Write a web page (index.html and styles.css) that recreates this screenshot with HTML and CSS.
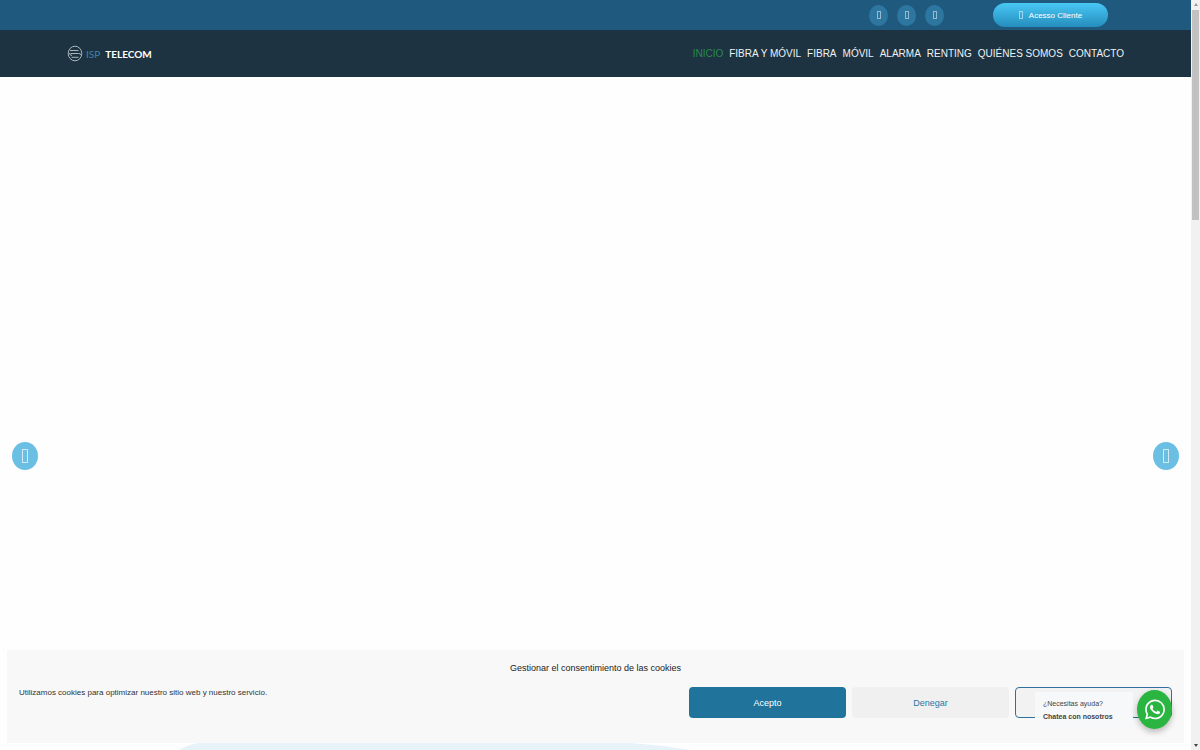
FILE: index.html
```
<!DOCTYPE html>
<html lang="es">
<head>
<meta charset="utf-8">
<meta name="viewport" content="width=device-width, initial-scale=1">
<title>ISP Telecom</title>
<link rel="stylesheet" href="styles.css">
</head>
<body>
<div class="page">
  <header>
    <div class="topbar">
      <nav class="social" aria-label="Redes sociales">
        <a href="#" aria-label="Facebook"><i class="box"></i></a>
        <a href="#" aria-label="Twitter"><i class="box"></i></a>
        <a href="#" aria-label="Instagram"><i class="box"></i></a>
      </nav>
      <a class="access" href="#"><i class="box"></i>Acesso Cliente</a>
    </div>
    <div class="mainbar">
      <a class="logo" href="#">
        <svg class="logo-mark" viewBox="0 0 16 17" aria-hidden="true"><ellipse cx="8" cy="8.500" rx="6.800" ry="7.300"/><path d="M3 5.500H11.500M3.500 8.500h8q2.500 0 2.500 1.500M2 8q.5 2 3 2.500M4.500 12.300h7"/></svg>
        <span class="logo-isp">ISP</span><span class="logo-name">TELECOM</span>
      </a>
      <nav class="menu" aria-label="Principal">
        <a class="active" href="#">INICIO</a>
        <a href="#">FIBRA Y MÓVIL</a>
        <a href="#">FIBRA</a>
        <a href="#">MÓVIL</a>
        <a href="#">ALARMA</a>
        <a href="#">RENTING</a>
        <a href="#">QUIÉNES SOMOS</a>
        <a href="#">CONTACTO</a>
      </nav>
    </div>
  </header>
  <main class="slider">
    <button class="arrow" aria-label="Anterior"><i class="box"></i></button>
    <button class="arrow" aria-label="Siguiente"><i class="box"></i></button>
  </main>
  <svg class="wave" viewBox="0 0 510 7" preserveAspectRatio="none" aria-hidden="true"><path d="M0 7Q8 2 19 0H448Q480 2 510 7Z"/></svg>
  <section class="cookies" aria-labelledby="cookie-title">
    <h2 id="cookie-title">Gestionar el consentimiento de las cookies</h2>
    <div class="cookie-row">
      <p>Utilizamos cookies para optimizar nuestro sitio web y nuestro servicio.</p>
      <div class="choices">
        <button class="choice accept">Acepto</button>
        <button class="choice deny">Denegar</button>
        <button class="choice prefs" aria-label="Preferencias"></button>
      </div>
    </div>
  </section>
  <aside class="chat">
    <p class="chat-text">¿Necesitas ayuda?<br><strong>Chatea con nosotros</strong></p>
    <a class="whatsapp" href="#" aria-label="WhatsApp">
      <svg viewBox="0 0 24 24" aria-hidden="true"><path d="M17.472 14.382c-.297-.149-1.758-.867-2.030-.967-.273-.099-.471-.148-.67.150-.197.297-.767.966-.940 1.164-.173.199-.347.223-.644.075-.297-.150-1.255-.463-2.390-1.475-.883-.788-1.480-1.761-1.653-2.059-.173-.297-.018-.458.130-.606.134-.133.298-.347.446-.520.149-.174.198-.298.298-.497.099-.198.050-.371-.025-.520-.075-.149-.669-1.612-.916-2.207-.242-.579-.487-.500-.669-.510-.173-.008-.371-.010-.570-.010-.198 0-.520.074-.792.372-.272.297-1.040 1.016-1.040 2.479 0 1.462 1.065 2.875 1.213 3.074.149.198 2.096 3.200 5.077 4.487.709.306 1.262.489 1.694.625.712.227 1.360.195 1.871.118.571-.085 1.758-.719 2.006-1.413.248-.694.248-1.289.173-1.413-.074-.124-.272-.198-.570-.347m-5.421 7.403h-.004a9.870 9.870 0 01-5.031-1.378l-.361-.214-3.741.982.998-3.648-.235-.374a9.860 9.860 0 01-1.510-5.260c.001-5.450 4.436-9.884 9.888-9.884 2.640 0 5.122 1.030 6.988 2.898a9.825 9.825 0 012.893 6.994c-.003 5.450-4.437 9.884-9.885 9.884m8.413-18.297A11.815 11.815 0 0012.050 0C5.495 0 .160 5.335.157 11.892c0 2.096.547 4.142 1.588 5.945L.057 24l6.305-1.654a11.882 11.882 0 005.683 1.448h.005c6.554 0 11.890-5.335 11.893-11.893a11.821 11.821 0 00-3.480-8.413z"/></svg>
    </a>
  </aside>
</div>
<div class="scrollbar" aria-hidden="true"><i class="up"></i><div class="thumb"></div><i class="down"></i></div>
</body>
</html>
```
FILE: styles.css
```
* { box-sizing: border-box; }
body {
  margin: 0;
  height: 100vh;
  display: flex;
  overflow: hidden;
  background: #fefefe;
  font-family: "Liberation Sans", Arial, sans-serif;
  font-size: 9px;
  color: #333;
}
a { color: inherit; text-decoration: none; }
button { font: inherit; padding: 0; border: 0; cursor: pointer; }
p, h2 { margin: 0; }
.page { position: relative; flex: 1; min-width: 0; display: flex; flex-direction: column; }

.box { display: block; width: 4px; height: 8px; border: 1px solid #ffffff80; }
.topbar {
  height: 30px;
  padding-right: 83px;
  display: flex;
  justify-content: flex-end;
  align-items: center;
  gap: 49px;
  background: #20597e;
}
.social { display: flex; gap: 9px; }
.social a {
  width: 19px;
  height: 21px;
  border-radius: 50%;
  display: grid;
  place-items: center;
  background: #2d76a0;
}
.access {
  width: 115px;
  height: 24px;
  border-radius: 12px;
  display: flex;
  justify-content: center;
  align-items: center;
  gap: 6px;
  color: #fff;
  font-size: 8px;
  background: linear-gradient(#48c8f5, #258dbd);
}
.mainbar {
  height: 47px;
  padding: 0 67px;
  display: flex;
  justify-content: space-between;
  align-items: center;
  background: #1d3341;
}
.logo { display: flex; align-items: center; color: #fff; font-family: Lato, sans-serif; font-size: 10px; }
.logo-mark { width: 16px; height: 17px; margin-right: 3px; fill: none; stroke: #a9b6bd; stroke-width: 1; }
.logo-isp { color: #3c83ad; margin-right: 5px; }
.logo-name { font-weight: 700; }
.menu { display: flex; gap: 6px; color: #eef2f4; font-size: 10px; }
.menu .active { color: #288a4b; }

.slider { flex: 1; padding: 91px 12px 0; display: flex; justify-content: space-between; align-items: center; }
.arrow { width: 26px; height: 28px; border-radius: 50%; display: grid; place-items: center; background: #6bbfe3; }
.arrow .box { width: 6px; height: 14px; border-color: #ffffffb0; }
.wave { width: 43%; height: 7px; margin-left: 15%; fill: #e7f2f9; }

.cookies {
  position: absolute;
  left: 7px;
  right: 7px;
  bottom: 7px;
  padding: 12px 12px 25px;
  background: #f8f8f8;
}
.cookies h2 { font-size: 9px; line-height: 12px; font-weight: 400; text-align: center; color: #222; }
.cookie-row { display: flex; justify-content: space-between; padding-top: 13px; }
.cookie-row p { font-size: 8px; line-height: 12px; }
.choices { display: flex; gap: 6px; }
.choice { width: 157px; height: 31px; border-radius: 4px; }
.accept { background: #20739a; color: #fff; }
.deny { background: #f0f0f0; color: #2878a5; }
.prefs { background: #f2f2f2; border: 1px solid #2e719d; }

.chat { position: absolute; right: 19px; bottom: 21px; display: flex; align-items: center; gap: 4px; }
.chat-text {
  width: 98px;
  padding: 5px 8px;
  background: #f6f8fa;
  color: #444;
  font-size: 7px;
  line-height: 13px;
}
.whatsapp {
  width: 35px;
  height: 39px;
  border-radius: 50%;
  display: grid;
  place-items: center;
  background: #2ab541;
  box-shadow: 0 3px 6px #0004;
}
.whatsapp svg { width: 20px; height: 21px; fill: #fff; }

.scrollbar { width: 9px; padding: 3px 1px; display: flex; flex-direction: column; align-items: center; gap: 4px; background: #f1f1f1; }
.thumb { width: 7px; height: 28vh; background: #c1c1c1; }
.up, .down { border: 2px solid transparent; }
.up { border-top: 0; border-bottom: 3px solid #999; }
.down { border-bottom: 0; border-top: 3px solid #444; margin-top: auto; }
```
